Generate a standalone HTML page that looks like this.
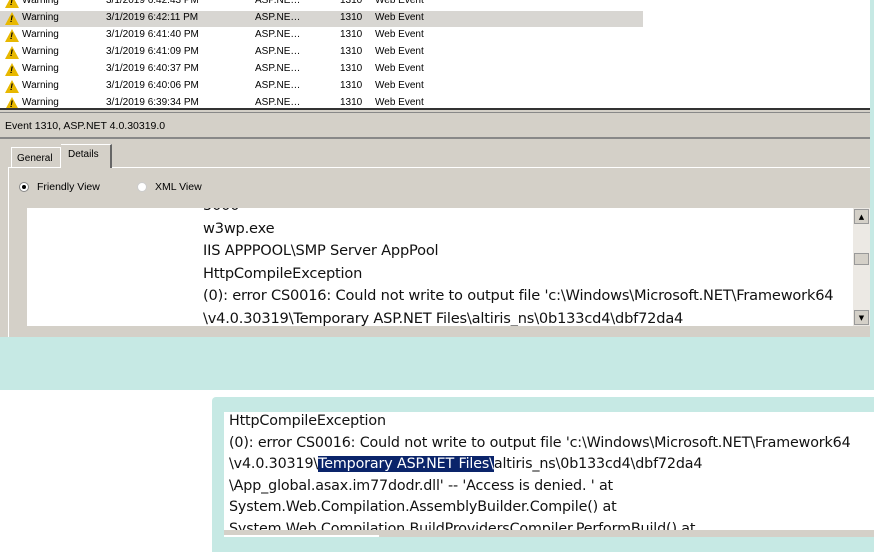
<!DOCTYPE html>
<html><head><style>
*{margin:0;padding:0;box-sizing:border-box}
body{width:874px;height:552px;overflow:hidden;background:#fff;position:relative;font-family:"DejaVu Sans","Liberation Sans",sans-serif}
.a{position:absolute}
.row{position:absolute;left:0;height:17px;width:643px;font-size:10px;color:#000;font-family:"Liberation Sans",sans-serif}
.row span{position:absolute;top:2px}
.tri{position:absolute;left:5px;top:2px;width:0;height:0;border-left:7px solid transparent;border-right:7px solid transparent;border-bottom:13px solid #e8b800}
.tri:after{content:"!";position:absolute;left:-2px;top:2px;font-size:9px;font-weight:bold;color:#000}
.t{font-family:"DejaVu Sans",sans-serif;font-size:14.6px;color:#111;white-space:nowrap;letter-spacing:-0.2px}
</style></head><body>
<div class="a" style="left:0;top:0;width:874px;height:108px;background:#fff"></div>
<div class="a" style="left:0;top:11px;width:643px;height:16px;background:#d8d6d2"></div>
<div class="row" style="top:-7px"><i class="tri"></i><span style="left:22px">Warning</span><span style="left:106px">3/1/2019 6:42:43 PM</span><span style="left:255px">ASP.NE…</span><span style="left:340px">1310</span><span style="left:375px">Web Event</span></div>
<div class="row" style="top:10px"><i class="tri"></i><span style="left:22px">Warning</span><span style="left:106px">3/1/2019 6:42:11 PM</span><span style="left:255px">ASP.NE…</span><span style="left:340px">1310</span><span style="left:375px">Web Event</span></div>
<div class="row" style="top:27px"><i class="tri"></i><span style="left:22px">Warning</span><span style="left:106px">3/1/2019 6:41:40 PM</span><span style="left:255px">ASP.NE…</span><span style="left:340px">1310</span><span style="left:375px">Web Event</span></div>
<div class="row" style="top:44px"><i class="tri"></i><span style="left:22px">Warning</span><span style="left:106px">3/1/2019 6:41:09 PM</span><span style="left:255px">ASP.NE…</span><span style="left:340px">1310</span><span style="left:375px">Web Event</span></div>
<div class="row" style="top:61px"><i class="tri"></i><span style="left:22px">Warning</span><span style="left:106px">3/1/2019 6:40:37 PM</span><span style="left:255px">ASP.NE…</span><span style="left:340px">1310</span><span style="left:375px">Web Event</span></div>
<div class="row" style="top:78px"><i class="tri"></i><span style="left:22px">Warning</span><span style="left:106px">3/1/2019 6:40:06 PM</span><span style="left:255px">ASP.NE…</span><span style="left:340px">1310</span><span style="left:375px">Web Event</span></div>
<div class="row" style="top:95px"><i class="tri"></i><span style="left:22px">Warning</span><span style="left:106px">3/1/2019 6:39:34 PM</span><span style="left:255px">ASP.NE…</span><span style="left:340px">1310</span><span style="left:375px">Web Event</span></div>
<div class="a" style="left:870px;top:0;width:4px;height:337px;background:#c6e9e4"></div>
<div class="a" style="left:0;top:108px;width:870px;height:229px;background:#d4d0c8;border-top:2px solid #333"></div>
<div class="a" style="left:0;top:112px;width:870px;height:1px;background:#888"></div>
<div class="a" style="left:5px;top:120px;font-size:10.5px;font-family:'Liberation Sans',sans-serif">Event 1310, ASP.NET 4.0.30319.0</div>
<div class="a" style="left:0;top:137px;width:870px;height:2px;background:#888"></div>
<div class="a" style="left:8px;top:167px;width:862px;height:170px;border-left:1px solid #fff;border-top:1px solid #fff"></div>
<div class="a" style="left:11px;top:147px;width:50px;height:20px;border:1px solid #fff;border-bottom:none;font-size:10px;font-family:'Liberation Sans',sans-serif;padding:5px 0 0 5px">General</div>
<div class="a" style="left:61px;top:144px;width:51px;height:24px;background:#d4d0c8;border-top:1px solid #fff;border-right:2px solid #666;font-size:10px;font-family:'Liberation Sans',sans-serif;padding:4px 0 0 7px">Details</div>
<div class="a" style="left:19px;top:182px;width:10px;height:10px;border-radius:50%;background:#fff;border:1px solid #888"><div style="margin:2px;width:4px;height:4px;border-radius:50%;background:#000"></div></div>
<div class="a" style="left:37px;top:181px;font-size:10.5px;font-family:'Liberation Sans',sans-serif">Friendly View</div>
<div class="a" style="left:137px;top:182px;width:10px;height:10px;border-radius:50%;background:#fff;border:1px solid #ccc"></div>
<div class="a" style="left:155px;top:181px;font-size:10.5px;font-family:'Liberation Sans',sans-serif">XML View</div>
<div class="a" style="left:27px;top:208px;width:826px;height:118px;background:#fff;overflow:hidden">
<div class="t a" style="left:176px;top:-13px;line-height:22.5px">5000<br>w3wp.exe<br>IIS APPPOOL\SMP Server AppPool<br>HttpCompileException<br>(0): error CS0016: Could not write to output file 'c:\Windows\Microsoft.NET\Framework64<br>\v4.0.30319\Temporary ASP.NET Files\altiris_ns\0b133cd4\dbf72da4</div></div>
<div class="a" style="left:853px;top:208px;width:17px;height:118px;background:#ece9e4"></div>
<div class="a" style="left:854px;top:209px;width:15px;height:15px;background:#d4d0c8;border:1px solid #999;font-size:7px;text-align:center;line-height:14px">▲</div>
<div class="a" style="left:854px;top:253px;width:15px;height:12px;background:#d4d0c8;border:1px solid #999"></div>
<div class="a" style="left:854px;top:310px;width:15px;height:15px;background:#d4d0c8;border:1px solid #999;font-size:7px;text-align:center;line-height:14px">▼</div>
<div class="a" style="left:0;top:337px;width:874px;height:53px;background:#c6e9e4"></div>
<div class="a" style="left:212px;top:397px;width:662px;height:155px;background:#c6e9e4;border-radius:4px 0 0 0"></div>
<div class="a" style="left:224px;top:412px;width:650px;height:118px;background:#fff;overflow:hidden">
<div class="t a" style="left:5px;top:-1px;line-height:21.6px;font-size:14.3px;letter-spacing:-0.15px">HttpCompileException<br>(0): error CS0016: Could not write to output file 'c:\Windows\Microsoft.NET\Framework64<br>\v4.0.30319\<span style="background:#0a246a;color:#fff">Temporary ASP.NET Files\</span>altiris_ns\0b133cd4\dbf72da4<br>\App_global.asax.im77dodr.dll' -- 'Access is denied. ' at<br>System.Web.Compilation.AssemblyBuilder.Compile() at<br>System.Web.Compilation.BuildProvidersCompiler.PerformBuild() at</div></div>
<div class="a" style="left:224px;top:530px;width:650px;height:7px;background:#d4d0c8"></div>
<div class="a" style="left:224px;top:535px;width:155px;height:2px;background:#fff"></div>
</body></html>
